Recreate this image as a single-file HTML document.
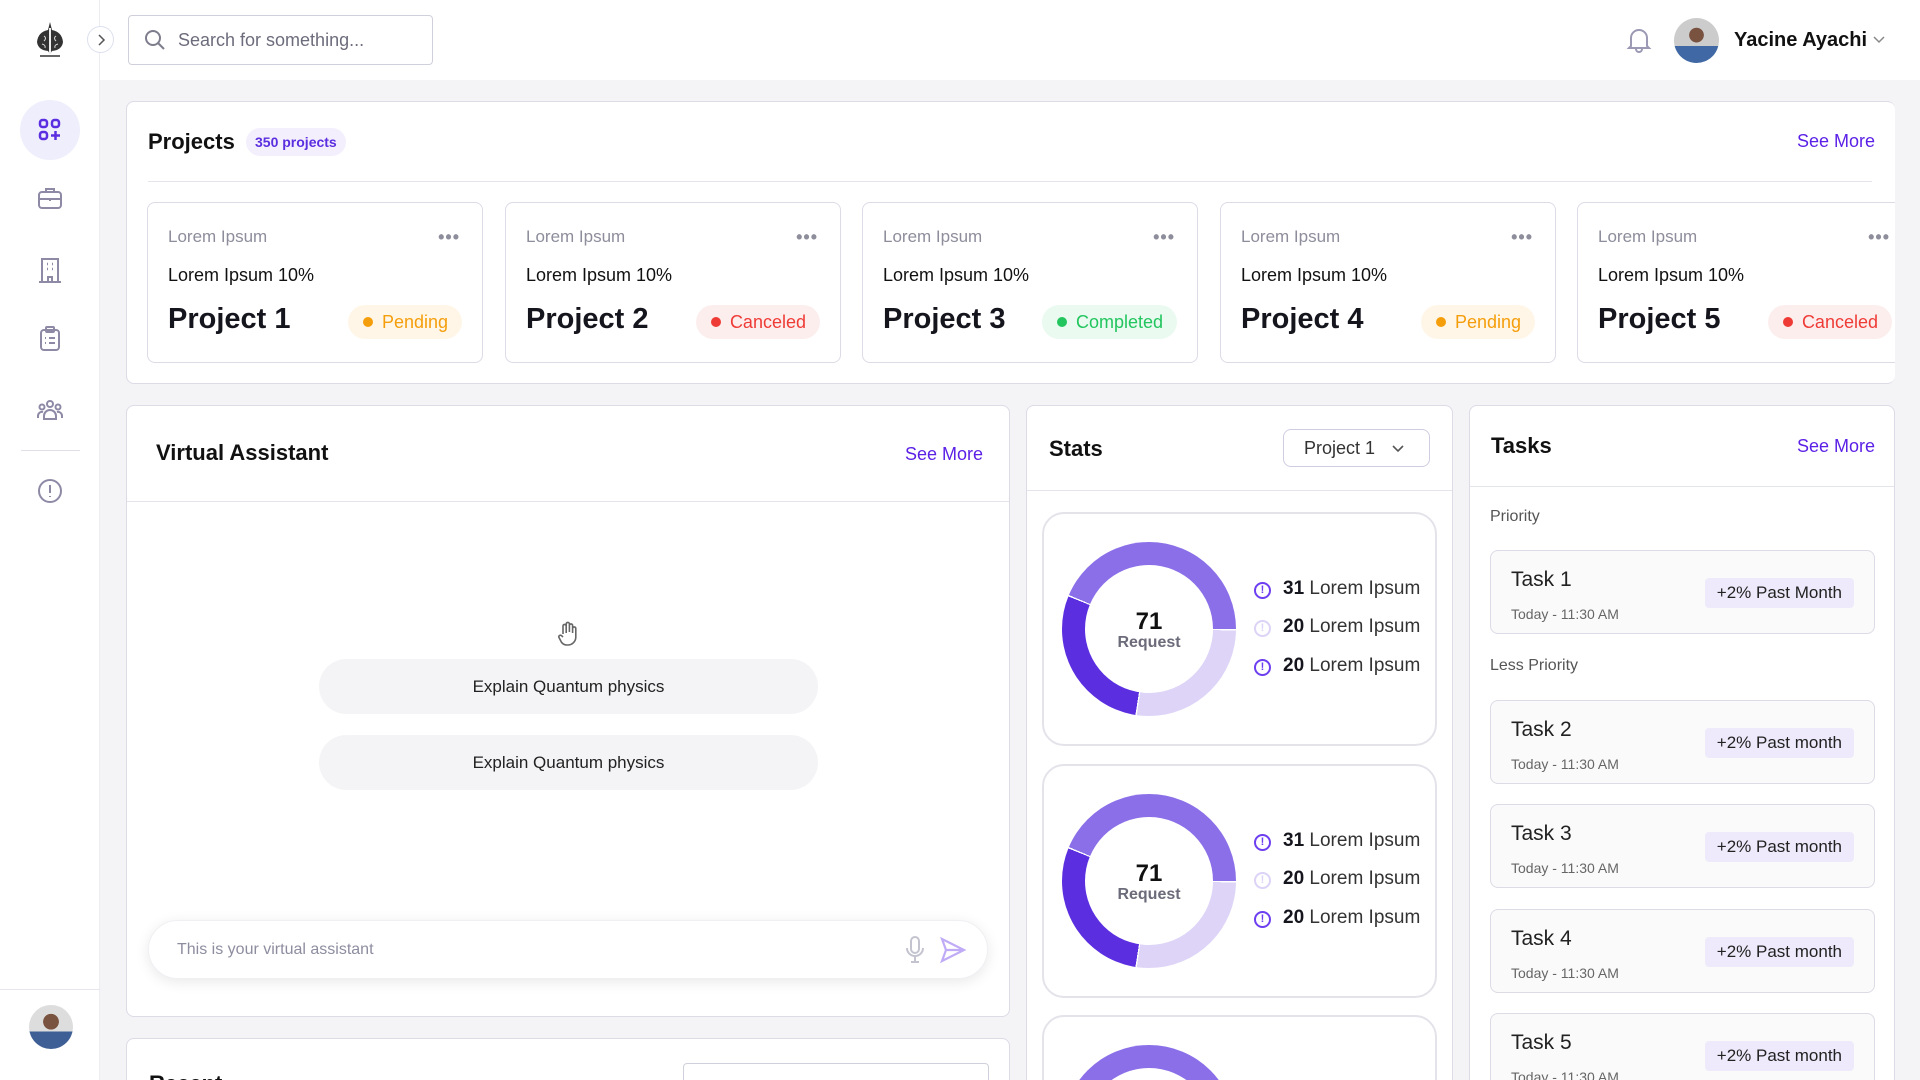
<!DOCTYPE html>
<html style="overflow:hidden;width:1920px;height:1080px"><head><meta charset="utf-8"><style>
*{box-sizing:border-box;margin:0;padding:0}
body{width:1920px;height:1080px;overflow:hidden;background:#f4f4f7;font-family:"Liberation Sans",Arial,sans-serif;color:#111;position:relative}
.a{position:absolute}
.side{left:0;top:0;width:100px;height:1080px;background:#fff;border-right:1px solid #ececf1}
.head{left:100px;top:0;width:1820px;height:80px;background:#fff}
.panel{background:#fff;border:1px solid #dcdbe6;border-radius:8px;overflow:hidden}
.card{border:1px solid #dcdbe6;border-radius:8px;width:336px;height:161px;background:#fff}
.card .l{position:absolute;left:20px;top:24px;font-size:17px;color:#8d8d9c}
.card .d{position:absolute;right:22px;top:24px;font-size:18px;color:#8d8d9c;letter-spacing:1px;font-weight:bold}
.card .p{position:absolute;left:20px;top:62px;font-size:18px}
.card .t{position:absolute;left:20px;top:100px;font-size:29px;font-weight:bold;color:#15151e}
.badge{position:absolute;right:20px;top:102px;height:34px;border-radius:17px;font-size:18px;line-height:34px;padding:0 14px 0 34px}
.badge:before{content:"";position:absolute;left:15px;top:12px;width:10px;height:10px;border-radius:50%;background:currentColor}
.pend{background:#fff6e8;color:#f59e0b}.canc{background:#fdeeee;color:#ef3b35}.comp{background:#eafaf0;color:#22c55e}
.see{color:#5b21e6;font-size:18px}
.h2{font-size:22px;font-weight:bold}
.donutc{border:2px solid #e4e3ea;border-radius:22px;background:#fff;width:395px}
.donut{position:absolute;left:18px;width:174px;height:174px;border-radius:50%;background:conic-gradient(#8b6fe8 0deg 90deg,#fff 90deg 91deg,#ddd4f7 91deg 188deg,#fff 188deg 189deg,#5b2ee0 189deg 292deg,#fff 292deg 293deg,#8b6fe8 293deg 360deg)}
.donut:after{content:"";position:absolute;left:23px;top:23px;width:128px;height:128px;border-radius:50%;background:#fff}
.donut .n{position:absolute;z-index:2;left:0;width:174px;top:66px;text-align:center;font-size:24px;font-weight:bold}
.donut .r{position:absolute;z-index:2;left:0;width:174px;top:92px;text-align:center;font-size:16px;font-weight:bold;color:#6b6b7a}
.leg{position:absolute;left:210px;font-size:19px;color:#333}
.leg b{color:#15151e}
.leg i{display:inline-block;width:17px;height:17px;border:2px solid #6d3ff0;border-radius:50%;font-style:normal;font-size:11px;text-align:center;line-height:13px;color:#6d3ff0;font-weight:bold;margin-right:12px;vertical-align:1px}
.leg i.lt{border-color:#dcd3f7;color:#dcd3f7}
.task{position:absolute;left:20px;width:385px;height:84px;border:1px solid #dcdbe6;border-radius:8px;background:#fafafa}
.task .tt{position:absolute;left:20px;top:17px;font-size:21px;color:#222}
.task .tm{position:absolute;left:20px;top:55px;font-size:14px;color:#666}
.task .tb{position:absolute;right:20px;top:27px;height:30px;line-height:30px;padding:0 12px;background:#eeeafb;border-radius:4px;font-size:17px;color:#222}
.pill{position:absolute;left:318px;width:499px;height:55px;border-radius:28px;background:#f4f4f6;text-align:center;line-height:55px;font-size:17px;color:#222}
</style></head><body>
<div class="a side">
 <svg class="a" style="left:34px;top:20px" width="32" height="38" viewBox="0 0 32 38"><path d="M16 2 L18 10 Q28 12 29 22 Q28 30 18 31 L16 34 L14 31 Q4 30 3 22 Q4 12 14 10Z" fill="#333"/><path d="M10 16 q3 2 0 5 M22 16 q-3 2 0 5 M8 24 q4 1 3 4 M24 24 q-4 1 -3 4" stroke="#ddd" fill="none"/><rect x="15" y="8" width="2" height="26" fill="#eee"/><line x1="6" y1="36" x2="26" y2="36" stroke="#333" stroke-width="1.5"/></svg>
 <div class="a" style="left:20px;top:100px;width:60px;height:60px;border-radius:50%;background:#eeeefc"></div>
 <svg class="a" style="left:38px;top:118px" width="24" height="24" viewBox="0 0 24 24" fill="none" stroke="#5b2ee0" stroke-width="2.5"><rect x="2" y="2" width="7" height="7" rx="2.5"/><rect x="14" y="2" width="7" height="7" rx="2.5"/><rect x="2" y="14" width="7" height="7" rx="2.5"/><path d="M17.5 13v9M13 17.5h9"/></svg>
 <svg class="a" style="left:37px;top:185px" width="26" height="26" viewBox="0 0 26 26" fill="none" stroke="#8e8aa6" stroke-width="2"><rect x="2" y="7" width="22" height="16" rx="3"/><path d="M9 7V4h8v3M2 14h22M13 14v2"/></svg>
 <svg class="a" style="left:38px;top:256px" width="24" height="28" viewBox="0 0 24 28" fill="none" stroke="#8e8aa6" stroke-width="2"><path d="M4 26V3h16v23M1 26h22M10 26v-5h4v5"/><path d="M9 8h1M14 8h1M9 13h1M14 13h1" stroke-width="2.5"/></svg>
 <svg class="a" style="left:39px;top:326px" width="22" height="26" viewBox="0 0 22 26" fill="none" stroke="#8e8aa6" stroke-width="2"><rect x="2" y="4" width="18" height="20" rx="3"/><rect x="7" y="1" width="8" height="5" rx="1"/><path d="M6 12h1M10 12h6M6 17h1M10 17h6"/></svg>
 <svg class="a" style="left:36px;top:398px" width="28" height="24" viewBox="0 0 28 24" fill="none" stroke="#8e8aa6" stroke-width="2"><circle cx="14" cy="6" r="3"/><circle cx="6" cy="9" r="2.5"/><circle cx="22" cy="9" r="2.5"/><path d="M8 21v-3a6 6 0 0112 0v3zM2 20v-2a4 4 0 015-4M26 20v-2a4 4 0 00-5-4"/></svg>
 <div class="a" style="left:21px;top:450px;width:59px;height:1px;background:#e0e0e8"></div>
 <svg class="a" style="left:37px;top:478px" width="26" height="26" viewBox="0 0 26 26" fill="none" stroke="#8e8aa6" stroke-width="2"><circle cx="13" cy="13" r="11"/><path d="M13 7v8M13 18v1"/></svg>
 <div class="a" style="left:0;top:989px;width:100px;height:1px;background:#e6e6ee"></div>
 <div class="a" style="left:29px;top:1005px;width:44px;height:44px;border-radius:50%;background:radial-gradient(circle at 50% 38%,#7a5240 0 22%,transparent 23%),linear-gradient(#ddd 0 60%,#3d5f95 60%)"></div>
</div>
<div class="a head"></div>
<div class="a" style="left:87px;top:26px;width:27px;height:27px;border-radius:50%;border:1px solid #dde0ee;background:#fff"></div>
<svg class="a" style="left:96px;top:33px" width="10" height="14" viewBox="0 0 10 14" fill="none" stroke="#555" stroke-width="1.5"><path d="M3 2l5 5-5 5"/></svg>
<div class="a" style="left:128px;top:15px;width:305px;height:50px;border:1px solid #cfd0dc;border-radius:4px;background:#fff"></div>
<svg class="a" style="left:144px;top:29px" width="22" height="22" viewBox="0 0 22 22" fill="none" stroke="#7d7d8e" stroke-width="2"><circle cx="9" cy="9" r="7"/><path d="M14 14l6 6"/></svg>
<div class="a" style="left:178px;top:30px;font-size:18px;color:#6c6c7c">Search for something...</div>
<svg class="a" style="left:1626px;top:26px" width="26" height="28" viewBox="0 0 26 28" fill="none" stroke="#9b99b4" stroke-width="2"><path d="M5 20V12a8 8 0 0116 0v8l2 2H3zM10 23a3 3 0 006 0"/></svg>
<div class="a" style="left:1674px;top:18px;width:45px;height:45px;border-radius:50%;background:radial-gradient(circle at 50% 38%,#7a5240 0 20%,transparent 21%),linear-gradient(#ccc 0 62%,#3f68a4 62%)"></div>
<div class="a" style="left:1734px;top:29px;font-size:20px;font-weight:bold">Yacine Ayachi</div>
<svg class="a" style="left:1872px;top:35px" width="14" height="10" viewBox="0 0 14 10" fill="none" stroke="#888" stroke-width="1.5"><path d="M2 2l5 5 5-5"/></svg>

<div class="a panel" style="left:126px;top:101px;width:1769px;height:283px;border-right:none">
 <div class="a h2" style="left:21px;top:27px">Projects</div>
 <div class="a" style="left:119px;top:26px;height:28px;padding:0 9px;border-radius:14px;background:#f3effd;color:#5b2ee0;font-size:14px;font-weight:bold;line-height:28px">350 projects</div>
 <div class="a see" style="left:1670px;top:29px">See More</div>
 <div class="a" style="left:21px;top:79px;width:1724px;height:1px;background:#e4e4ec"></div>
 <div class="a card" style="left:20px;top:100px"><div class="l">Lorem Ipsum</div><div class="d">•••</div><div class="p">Lorem Ipsum 10%</div><div class="t">Project 1</div><div class="badge pend">Pending</div></div>
 <div class="a card" style="left:378px;top:100px"><div class="l">Lorem Ipsum</div><div class="d">•••</div><div class="p">Lorem Ipsum 10%</div><div class="t">Project 2</div><div class="badge canc">Canceled</div></div>
 <div class="a card" style="left:735px;top:100px"><div class="l">Lorem Ipsum</div><div class="d">•••</div><div class="p">Lorem Ipsum 10%</div><div class="t">Project 3</div><div class="badge comp">Completed</div></div>
 <div class="a card" style="left:1093px;top:100px"><div class="l">Lorem Ipsum</div><div class="d">•••</div><div class="p">Lorem Ipsum 10%</div><div class="t">Project 4</div><div class="badge pend">Pending</div></div>
 <div class="a card" style="left:1450px;top:100px"><div class="l">Lorem Ipsum</div><div class="d">•••</div><div class="p">Lorem Ipsum 10%</div><div class="t">Project 5</div><div class="badge canc">Canceled</div></div>
</div>

<div class="a panel" style="left:126px;top:405px;width:884px;height:612px">
 <div class="a h2" style="left:29px;top:34px">Virtual Assistant</div>
 <div class="a see" style="left:778px;top:38px">See More</div>
 <div class="a" style="left:0;top:95px;width:884px;height:1px;background:#e4e4ec"></div>
 <svg class="a" style="left:429px;top:215px" width="24" height="26" viewBox="0 0 24 26" fill="none" stroke="#666" stroke-width="1.6"><path d="M7 13V5a1.6 1.6 0 013.2 0v7M10.2 11V3a1.6 1.6 0 013.2 0v8M13.4 11V4.5a1.6 1.6 0 013.2 0V12M16.6 12V7.5a1.6 1.6 0 013.2 0V16a8 8 0 01-8 8h-1a7 7 0 01-5.5-3L3 16.5a1.6 1.6 0 012.6-1.8L7 16"/></svg>
 <div class="pill" style="left:192px;top:253px">Explain Quantum physics</div>
 <div class="pill" style="left:192px;top:329px">Explain Quantum physics</div>
 <div class="a" style="left:21px;top:514px;width:840px;height:59px;border-radius:30px;background:#fff;box-shadow:0 3px 14px rgba(0,0,0,.09);border:1px solid #f0f0f4"></div>
 <div class="a" style="left:50px;top:535px;font-size:16px;color:#8d8da0">This is your virtual assistant</div>
 <svg class="a" style="left:778px;top:529px" width="20" height="30" viewBox="0 0 20 30" fill="none" stroke="#c4c4d0" stroke-width="2"><rect x="6" y="2" width="8" height="16" rx="4"/><path d="M2 13a8 8 0 0016 0M10 21v6M6 27h8"/></svg>
 <svg class="a" style="left:812px;top:530px" width="28" height="28" viewBox="0 0 28 28" fill="none" stroke="#c0acf6" stroke-width="2.2"><path d="M3 3l22 11L3 25l4-11zM7 14h18"/></svg>
</div>
<div class="a panel" style="left:126px;top:1038px;width:884px;height:42px;border-bottom:none;border-radius:8px 8px 0 0">
 <div class="a h2" style="left:22px;top:32px">Recent</div>
 <div class="a" style="left:556px;top:24px;width:306px;height:40px;border:1px solid #cfd0dc;border-radius:4px"></div>
</div>

<div class="a panel" style="left:1026px;top:405px;width:427px;height:675px;border-bottom:none;border-radius:8px 8px 0 0">
 <div class="a h2" style="left:22px;top:30px">Stats</div>
 <div class="a" style="left:256px;top:23px;width:147px;height:38px;border:1px solid #cfcde0;border-radius:8px;font-size:18px;color:#333;line-height:36px;padding-left:20px">Project 1</div>
 <svg class="a" style="left:364px;top:38px" width="14" height="10" viewBox="0 0 14 10" fill="none" stroke="#555" stroke-width="1.6"><path d="M2 2l5 5 5-5"/></svg>
 <div class="a" style="left:0;top:84px;width:427px;height:1px;background:#e4e4ec"></div>
 <div class="a donutc" style="left:15px;top:106px;height:234px">
  <div class="donut" style="top:28px"><div class="n">71</div><div class="r">Request</div></div>
  <div class="leg" style="top:64px"><i>!</i><b>31</b> Lorem Ipsum</div>
  <div class="leg" style="top:102px"><i class="lt">!</i><b>20</b> Lorem Ipsum</div>
  <div class="leg" style="top:141px"><i>!</i><b>20</b> Lorem Ipsum</div>
 </div>
 <div class="a donutc" style="left:15px;top:358px;height:234px">
  <div class="donut" style="top:28px"><div class="n">71</div><div class="r">Request</div></div>
  <div class="leg" style="top:64px"><i>!</i><b>31</b> Lorem Ipsum</div>
  <div class="leg" style="top:102px"><i class="lt">!</i><b>20</b> Lorem Ipsum</div>
  <div class="leg" style="top:141px"><i>!</i><b>20</b> Lorem Ipsum</div>
 </div>
 <div class="a donutc" style="left:15px;top:609px;height:234px">
  <div class="donut" style="top:28px"></div>
 </div>
</div>

<div class="a panel" style="left:1469px;top:405px;width:426px;height:675px;border-bottom:none;border-radius:8px 8px 0 0">
 <div class="a h2" style="left:21px;top:27px">Tasks</div>
 <div class="a see" style="left:327px;top:30px">See More</div>
 <div class="a" style="left:0;top:80px;width:426px;height:1px;background:#e4e4ec"></div>
 <div class="a" style="left:20px;top:102px;font-size:16px;color:#555">Priority</div>
 <div class="task" style="top:144px"><div class="tt">Task 1</div><div class="tm">Today - 11:30 AM</div><div class="tb">+2% Past Month</div></div>
 <div class="a" style="left:20px;top:251px;font-size:16px;color:#555">Less Priority</div>
 <div class="task" style="top:294px"><div class="tt">Task 2</div><div class="tm">Today - 11:30 AM</div><div class="tb">+2% Past month</div></div>
 <div class="task" style="top:398px"><div class="tt">Task 3</div><div class="tm">Today - 11:30 AM</div><div class="tb">+2% Past month</div></div>
 <div class="task" style="top:503px"><div class="tt">Task 4</div><div class="tm">Today - 11:30 AM</div><div class="tb">+2% Past month</div></div>
 <div class="task" style="top:607px"><div class="tt">Task 5</div><div class="tm">Today - 11:30 AM</div><div class="tb">+2% Past month</div></div>
</div>
</body></html>
